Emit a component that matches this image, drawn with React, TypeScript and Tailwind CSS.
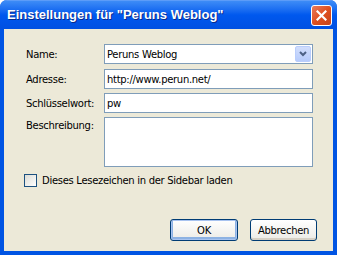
import React from 'react';

const font = { fontFamily: '"DejaVu Sans", Verdana, sans-serif' };

function Field({ value }: { value: string }) {
  return (
    <div className="h-[20px] w-[209px] border border-[#7f9db9] bg-white pl-[2px] flex items-center text-black">
      {value}
    </div>
  );
}

export default function App() {
  return (
    <div
      className="w-[337px] h-[255px] flex flex-col bg-[#0054e3] rounded-t-[7px] overflow-hidden text-[10px] tracking-[-0.3px]"
      style={font}
    >
      {/* Title bar */}
      <div className="h-[29px] shrink-0 flex items-center justify-between pl-[7px] pr-[5px] bg-gradient-to-b from-[#3d8cf6] via-[#0058ee] to-[#0050e2] border-t border-[#5c9cf8]">
        <span
          className="text-white font-bold text-[13px] tracking-[0px] [text-shadow:1px_1px_0_#0a2a8a]"
          style={{ fontFamily: '"Liberation Sans", Arial, sans-serif' }}
        >
          Einstellungen für "Peruns Weblog"
        </span>
        <div className="w-[21px] h-[21px] rounded-[3px] border border-white bg-gradient-to-br from-[#e87a5a] via-[#e0501f] to-[#c6441b] flex items-center justify-center">
          <svg width="11" height="11" viewBox="0 0 11 11">
            <path d="M1.5 1.5 L9.5 9.5 M9.5 1.5 L1.5 9.5" stroke="white" strokeWidth="2.2" strokeLinecap="square" />
          </svg>
        </div>
      </div>

      {/* Body */}
      <div className="flex-1 mx-[4px] mb-[4px] bg-[#ece9d8] flex flex-col pt-[15px] pl-[22px] pr-[16px] pb-[10px] text-black">
        <div className="grid grid-cols-[78px_209px] gap-y-[4px]">
          <div className="flex items-center">Name:</div>
          <div className="h-[20px] w-[209px] border border-[#7f9db9] bg-white pl-[2px] flex items-center justify-between pr-[1px] mb-[1px]">
            <span>Peruns Weblog</span>
            <div className="w-[16px] h-[16px] rounded-[2px] bg-gradient-to-b from-[#d2defc] to-[#b6cbfb] border border-[#b9cdfc] flex items-center justify-center">
              <svg width="8" height="6" viewBox="0 0 8 6">
                <path d="M1 1 L4 4 L7 1" stroke="#4d6185" strokeWidth="2" fill="none" />
              </svg>
            </div>
          </div>

          <div className="flex items-center">Adresse:</div>
          <Field value="http://www.perun.net/" />

          <div className="flex items-center">Schlüsselwort:</div>
          <Field value="pw" />

          <div className="pt-[1px]">Beschreibung:</div>
          <div className="h-[50px] w-[209px] border border-[#7f9db9] bg-white" />
        </div>

        <label className="flex items-center gap-[5px] mt-[6px] ml-[-2px]">
          <span className="w-[13px] h-[13px] border border-[#1c5180] bg-gradient-to-br from-[#dcdcd5] to-white" />
          <span>Dieses Lesezeichen in der Sidebar laden</span>
        </label>

        <div className="mt-auto flex justify-end gap-[12px]">
          <button className="w-[68px] h-[22px] rounded-[3px] border border-[#003c74] bg-gradient-to-b from-white to-[#ecebe6] shadow-[inset_0_0_0_1px_#a8c3f0,inset_0_-1px_0_2px_#8db2e3] text-black">
            OK
          </button>
          <button className="w-[67px] h-[22px] rounded-[3px] border border-[#003c74] bg-gradient-to-b from-white to-[#ecebe6] shadow-[inset_0_-2px_0_0_#d6d0c5] text-black">
            Abbrechen
          </button>
        </div>
      </div>
    </div>
  );
}
